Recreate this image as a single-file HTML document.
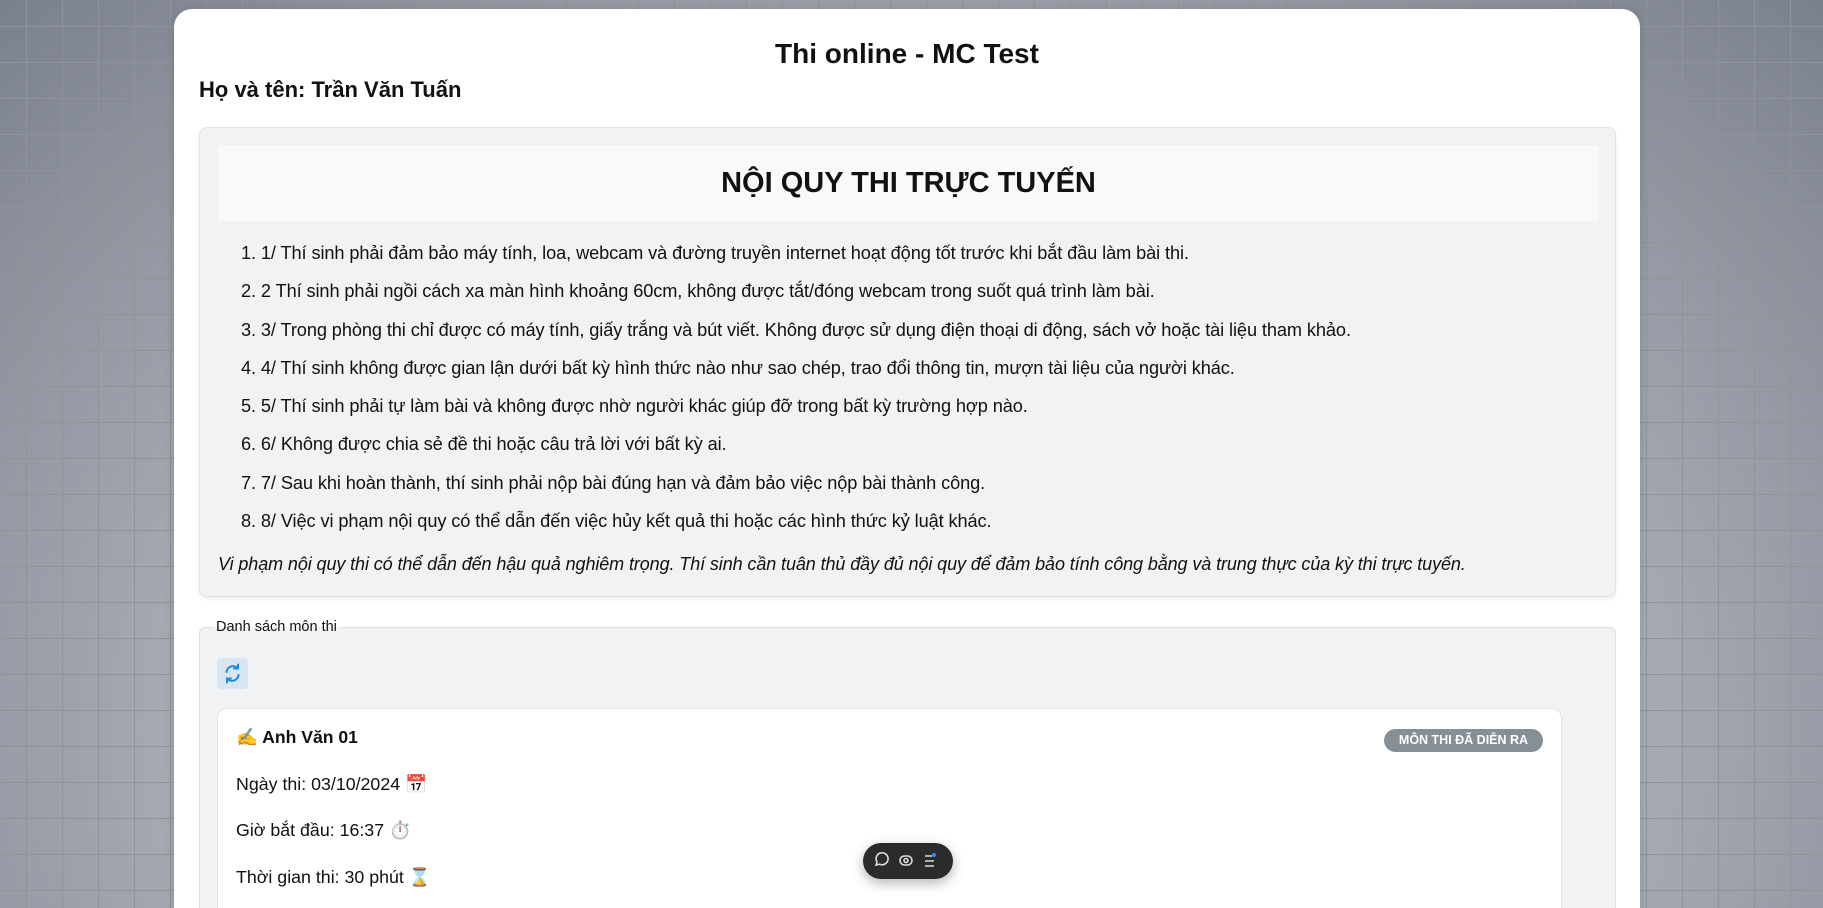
<!DOCTYPE html>
<html><head><meta charset="utf-8"><style>
*{box-sizing:border-box;margin:0;padding:0}
html,body{width:1823px;height:908px;overflow:hidden}
body{font-family:"Liberation Sans","DejaVu Sans",sans-serif;color:#111;position:relative;
background:
linear-gradient(#8e939c 1px,transparent 1px) 0 26px/36px 36px,
linear-gradient(90deg,#8e939c 1px,transparent 1px) 26px 0/36px 36px,
radial-gradient(ellipse at 50% 80%,#c0c3ca 0%,#a8acb5 55%,#7a808c 100%);}
.card{position:absolute;left:174px;top:9px;width:1466px;height:899px;background:#fff;border-radius:18px 18px 0 0;box-shadow:0 2px 10px rgba(0,0,0,.15);overflow:hidden}
.abs{position:absolute}
h1{position:absolute;left:0;width:100%;top:28px;text-align:center;font-size:28px;font-weight:bold;line-height:34px}
.name{left:25px;top:67px;font-size:22px;font-weight:bold;line-height:28px}
.p1{left:25px;top:118px;width:1417px;height:470px;background:#f1f2f4;border:1px solid #e1e3e6;border-radius:8px;box-shadow:0 2px 4px rgba(0,0,0,.08)}
.hd{position:absolute;left:18px;top:17px;width:1381px;height:76px;background:#f8f9fa;border-radius:4px;text-align:center;font-size:29px;font-weight:bold;line-height:76px}
ol{position:absolute;left:41px;top:106px;list-style:none;font-size:18.2px;line-height:38.3px;white-space:nowrap;letter-spacing:-0.1px}
.it{position:absolute;left:18px;top:426px;font-style:italic;font-size:18px;white-space:nowrap;letter-spacing:-0.1px}
.fs{left:25px;top:618px;width:1417px;height:290px;background:#f1f2f4;border:1px solid #dcdfe3;border-bottom:none;border-radius:6px 6px 0 0}
.lg{position:absolute;left:12px;top:-10px;font-size:14.5px;background:linear-gradient(#fff 50%,#f1f2f4 50%);padding:0 4px;line-height:18px}
.rb{position:absolute;left:17px;top:30px;width:31px;height:31px;background:#d8e6f3;border-radius:4px}
.ic{position:absolute;left:17px;top:80px;width:1345px;height:210px;background:#fff;border:1px solid #e1e3e6;border-bottom:none;border-radius:10px 10px 0 0}
.t{position:absolute;left:36px;font-size:17.8px;white-space:nowrap}
.badge{position:absolute;left:1166px;top:20px;width:159px;height:23px;border-radius:12px;background:#868e96;color:#fff;font-size:12.5px;font-weight:bold;text-align:center;line-height:23px}
.tb{position:absolute;left:863px;top:843px;width:90px;height:36px;background:#2a2b2d;border-radius:18px;box-shadow:0 4px 12px rgba(0,0,0,.3)}
</style></head><body>
<div class="card">
<h1>Thi online - MC Test</h1>
<div class="abs name">Họ và tên: Trần Văn Tuấn</div>
<div class="abs p1">
<div class="hd">NỘI QUY THI TRỰC TUYẾN</div>
<ol>
<li>1. 1/ Thí sinh phải đảm bảo máy tính, loa, webcam và đường truyền internet hoạt động tốt trước khi bắt đầu làm bài thi.</li>
<li>2. 2 Thí sinh phải ngồi cách xa màn hình khoảng 60cm, không được tắt/đóng webcam trong suốt quá trình làm bài.</li>
<li>3. 3/ Trong phòng thi chỉ được có máy tính, giấy trắng và bút viết. Không được sử dụng điện thoại di động, sách vở hoặc tài liệu tham khảo.</li>
<li>4. 4/ Thí sinh không được gian lận dưới bất kỳ hình thức nào như sao chép, trao đổi thông tin, mượn tài liệu của người khác.</li>
<li>5. 5/ Thí sinh phải tự làm bài và không được nhờ người khác giúp đỡ trong bất kỳ trường hợp nào.</li>
<li>6. 6/ Không được chia sẻ đề thi hoặc câu trả lời với bất kỳ ai.</li>
<li>7. 7/ Sau khi hoàn thành, thí sinh phải nộp bài đúng hạn và đảm bảo việc nộp bài thành công.</li>
<li>8. 8/ Việc vi phạm nội quy có thể dẫn đến việc hủy kết quả thi hoặc các hình thức kỷ luật khác.</li>
</ol>
<div class="it">Vi phạm nội quy thi có thể dẫn đến hậu quả nghiêm trọng. Thí sinh cần tuân thủ đầy đủ nội quy để đảm bảo tính công bằng và trung thực của kỳ thi trực tuyến.</div>
</div>
<div class="abs fs">
<div class="lg">Danh sách môn thi</div>
<div class="rb"><svg width="31" height="31" viewBox="0 0 31 31" fill="none" stroke="#1e88e5" stroke-width="2" stroke-linecap="round"><path d="M9.5 14a6.5 6.5 0 0 1 11.5-3.5M21.5 17a6.5 6.5 0 0 1-11.5 3.5"/><path d="M21 6.5v4h-4M10 24.5v-4h4"/></svg></div>
<div class="ic">
<div class="t" style="left:18px;top:18px;font-weight:bold;font-size:17.6px">✍️ Anh Văn 01</div>
<div class="badge">MÔN THI ĐÃ DIỄN RA</div>
<div class="t" style="left:18px;top:65px">Ngày thi: 03/10/2024 📅</div>
<div class="t" style="left:18px;top:111px">Giờ bắt đầu: 16:37 ⏱️</div>
<div class="t" style="left:18px;top:158px">Thời gian thi: 30 phút ⌛</div>
</div>
</div>
</div>
<div class="tb"><svg width="90" height="36" viewBox="0 0 90 36" fill="none" stroke="#ddd" stroke-width="1.6"><path d="M13 22l1-3a6 6 0 1 1 2.5 2.2z"/><rect x="37" y="13" width="12" height="9" rx="4.5"/><circle cx="43" cy="17.5" r="2"/><path d="M62 13h7M62 18h9M62 23h9"/><circle cx="71" cy="12" r="2" fill="#2e8cf0" stroke="none"/></svg></div>
</body></html>
